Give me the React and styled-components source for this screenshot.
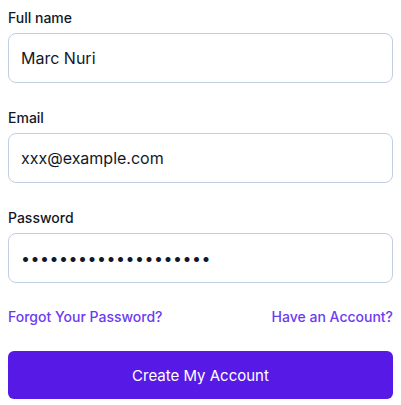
import React from 'react';
import styled, { createGlobalStyle } from 'styled-components';

const GlobalStyles = createGlobalStyle`
  * {
    box-sizing: border-box;
  }

  body {
    margin: 8px;
    background: #ffffff;
    font-family: Inter, 'Noto Sans', sans-serif;
    color: #111827;
  }
`;

const Form = styled.form`
  display: flex;
  flex-direction: column;
`;

const Field = styled.div`
  display: flex;
  flex-direction: column;
  gap: 5px;
  margin-bottom: 25px;
`;

const Label = styled.label`
  font-size: 14px;
  line-height: 20px;
  font-weight: 500;
  color: #111827;
`;

const Input = styled.input`
  height: 50px;
  width: 100%;
  padding: 0 12px;
  border: 1px solid #c1cfe2;
  border-radius: 8px;
  font-family: inherit;
  font-size: 16px;
  color: #111827;
  background: #ffffff;
  outline: none;
  letter-spacing: ${(p) => (p.type === 'password' ? '0.5px' : 'normal')};
`;

const LinkRow = styled.div`
  display: flex;
  justify-content: space-between;
  align-items: center;
  margin-top: -1px;
  margin-bottom: 24px;
`;

const TextLink = styled.a`
  font-size: 14px;
  line-height: 20px;
  font-weight: 500;
  color: #6b3cf0;
  text-decoration: none;
  cursor: pointer;
`;

const SubmitButton = styled.button`
  height: 48px;
  width: 100%;
  border: none;
  border-radius: 6px;
  background: #5719e5;
  color: #ffffff;
  font-family: inherit;
  font-size: 15px;
  font-weight: 400;
  cursor: pointer;
`;

const fields = [
  { id: 'name', label: 'Full name', type: 'text', value: 'Marc Nuri' },
  { id: 'email', label: 'Email', type: 'email', value: 'xxx@example.com' },
  { id: 'password', label: 'Password', type: 'password', value: 'supersecretpassword1' },
];

const App = () => (
  <>
    <GlobalStyles />
    <Form onSubmit={(e) => e.preventDefault()}>
      {fields.map((f) => (
        <Field key={f.id}>
          <Label htmlFor={f.id}>{f.label}</Label>
          <Input id={f.id} type={f.type} defaultValue={f.value} />
        </Field>
      ))}
      <LinkRow>
        <TextLink>Forgot Your Password?</TextLink>
        <TextLink>Have an Account?</TextLink>
      </LinkRow>
      <SubmitButton type="submit">Create My Account</SubmitButton>
    </Form>
  </>
);

export default App;
